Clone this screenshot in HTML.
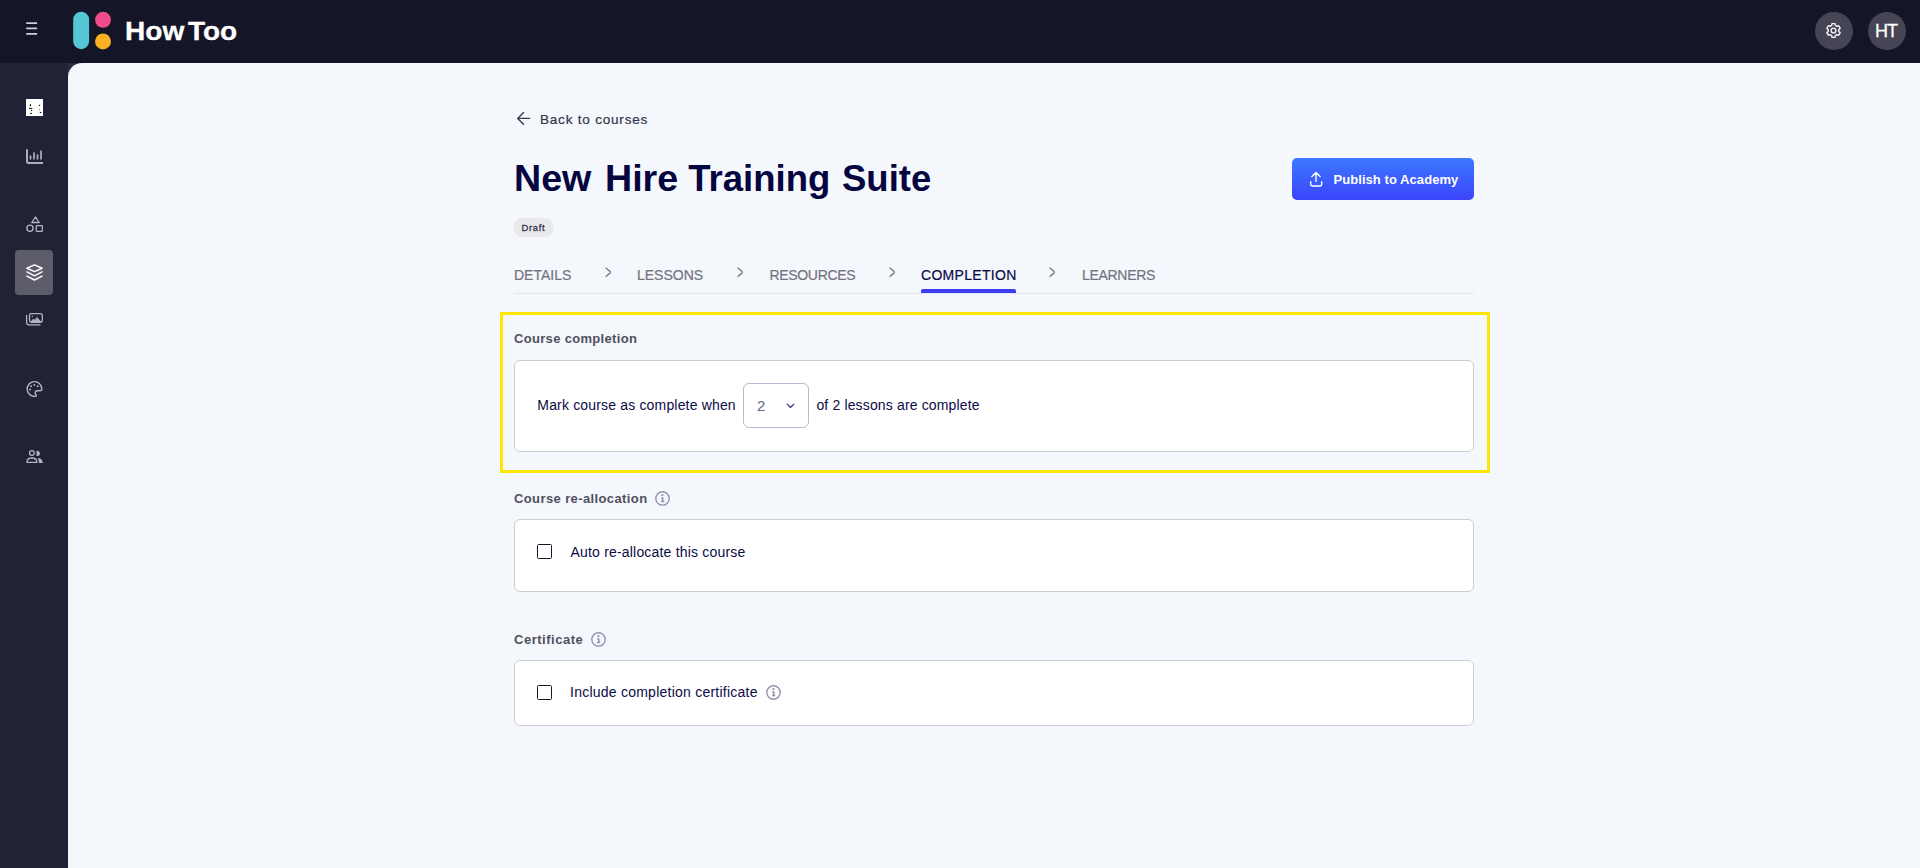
<!DOCTYPE html>
<html lang="en">
<head>
<meta charset="utf-8">
<title>New Hire Training Suite - Completion</title>
<style>
*{box-sizing:border-box;margin:0;padding:0}
html,body{width:1920px;height:868px;overflow:hidden}
body{font-family:"Liberation Sans",Arial,sans-serif;background:#151528;position:relative;color:#0a0a46}
.t{position:absolute;white-space:nowrap;line-height:1}
/* header */
#topbar{position:absolute;left:0;top:0;width:1920px;height:63px;background:#151528}
#sidebar{position:absolute;left:0;top:63px;width:68px;height:805px;background:#222236}
#corner{position:absolute;left:68px;top:63px;width:20px;height:20px;background:#2b2b3f}
#content{position:absolute;left:68px;top:63px;width:1852px;height:805px;background:#f4f7fc;border-top-left-radius:14px}
.brand{left:125px;top:18px;width:115px;height:26px;font-size:26px;font-weight:700;color:#fff;-webkit-text-stroke:.3px #fff}
.brand span{position:absolute;top:0;display:block;transform-origin:0 0;white-space:nowrap}
.circle{position:absolute;top:12px;width:38px;height:38px;border-radius:50%;background:#464556}
.ht{left:1867px;top:12px;width:38px;height:38px;line-height:38px;text-align:center;font-size:18px;color:#fff;letter-spacing:-1px;-webkit-text-stroke:.3px #fff}
/* sidebar */
.active-bg{position:absolute;left:15px;top:250px;width:38px;height:45px;border-radius:4px;background:#5c5c6b}
svg{position:absolute;overflow:visible}
/* main */
.back{left:540px;top:113.2px;font-size:13.5px;color:#33344a;letter-spacing:.8px;-webkit-text-stroke:.2px #33344a}
h1.t{left:513.6px;top:161.2px;width:420px;height:37px;font-size:36.5px;font-weight:700;color:#05053f}
h1.t span{position:absolute;top:0;display:block;transform-origin:0 0;white-space:nowrap}
.badge{position:absolute;left:514px;top:218px;width:39px;height:19px;border-radius:8px;background:#e9e9ec}
.badge-t{left:521.6px;top:223px;font-size:9.4px;font-weight:400;color:#34344a;letter-spacing:.65px;-webkit-text-stroke:.3px #34344a}
.tab{top:268px;font-size:14px;color:#73737f;-webkit-text-stroke:.2px #73737f}
.tab.on{color:#0a0a46;-webkit-text-stroke:.2px #0a0a46}
.chev{top:262px;width:20px;text-align:center;font-size:20px;color:#6d6d7a;transform:scale(.53,1.02);transform-origin:50% 50%}
.tabline{position:absolute;left:514px;top:293px;width:960px;height:1px;background:#e2e4ea}
.tabul{position:absolute;left:921px;top:289px;width:95px;height:4px;border-radius:2px 2px 0 0;background:#3d3df2}
.pub{position:absolute;left:1292px;top:158px;width:182px;height:42px;border-radius:5px;background:linear-gradient(180deg,#3d78ff 0%,#3b44fb 100%)}
.pub-t{left:1333.5px;top:173px;font-size:13px;font-weight:700;color:#fff;letter-spacing:.06px}
.hl{position:absolute;left:500px;top:312px;width:990px;height:161px;border:3px solid #ffe600}
.sec{font-size:13px;font-weight:700;color:#50505e}
.card{position:absolute;left:514px;width:960px;background:#fff;border:1px solid #cdced4;border-radius:6px}
.lbl{font-size:14px;color:#0b0b45}
.sel{position:absolute;left:743px;top:383px;width:66px;height:45px;border:1px solid #b6b9d6;border-radius:6px;background:#fff}
.selv{left:757px;top:398px;font-size:15px;color:#63668f}
.cb{position:absolute;left:537px;width:15px;height:15px;border:1.5px solid #16162f;border-radius:1.5px;background:#fff}
</style>
</head>
<body>
<div id="topbar"></div>
<div id="sidebar"></div>
<div id="corner"></div>
<div id="content"></div>

<!-- top bar -->
<div class="t brand"><span style="left:-.4px;transform:scaleX(1.08)">How</span> <span style="left:63px;transform:scaleX(1.076)">Too</span></div>
<div class="circle" style="left:1815px"></div>
<div class="circle" style="left:1868px"></div>
<div class="t ht">HT</div>

<!-- sidebar icons placeholder -->
<div class="active-bg"></div>

<svg width="1920" height="868" viewBox="0 0 1920 868" style="left:0;top:0;pointer-events:none" fill="none" stroke-linecap="round" stroke-linejoin="round">
 <!-- burger + logo mark -->
 <path d="M26.2,23.05 H37.1 M26.2,28.45 H37.1 M26.2,33.8 H37.1" stroke="#cfcfd6" stroke-width="1.7" stroke-linecap="butt"/>
 <rect x="73.2" y="11.7" width="15.9" height="37.5" rx="7.95" fill="#54c6d6"/>
 <circle cx="103" cy="19.8" r="7.95" fill="#f04b8b"/>
 <circle cx="103" cy="41.45" r="7.95" fill="#fcb122"/>
 <!-- dashboard (glitched tile) -->
 <g>
  <rect x="26" y="99" width="17" height="17" fill="#fff"/>
  <g fill="#111">
   <rect x="29.8" y="104.2" width="1.2" height="2"/><rect x="38.9" y="104.8" width="1.2" height="1.2"/>
   <rect x="29" y="107.9" width="3.2" height="1"/><rect x="30.9" y="109.9" width="1.2" height="1.2"/>
   <rect x="39.8" y="111.9" width="1.6" height="1.1"/><rect x="30" y="112.9" width="2" height="1"/>
  </g>
  <rect x="39" y="108.9" width="1" height="1.4" fill="#999"/>
 </g>
 <!-- chart -->
 <g stroke="#aeaebb" stroke-width="2" stroke-linecap="butt">
  <path d="M27,149.3 V161.2 a1.8,1.8 0 0 0 1.8,1.8 H43"/>
  <path d="M30.5,156 V158.8 M34,153 V158.8 M37.5,155 V158.8 M41,151 V158.8" stroke-linecap="round" stroke-width="1.7"/>
 </g>
 <!-- shapes -->
 <g stroke="#b4b4c0" stroke-width="1.3">
  <path d="M35.5,217 L39.2,222.5 H31.8 Z"/>
  <circle cx="30" cy="228.25" r="3.1"/>
  <rect x="36.25" y="225.65" width="6.1" height="5.7" rx=".7"/>
 </g>
 <!-- layers (active) -->
 <g stroke="#fff" stroke-width="1.5">
  <path d="M34.5,264.9 L42.1,268.3 L34.5,271.6 L26.9,268.3 Z"/>
  <path d="M27,271.9 L34.5,275.8 L42,271.9"/>
  <path d="M27,276.1 L34.5,280 L42,276.1"/>
 </g>
 <!-- images -->
 <g stroke="#b4b4c0" stroke-width="1.3">
  <rect x="29.55" y="313.65" width="12.8" height="8.6" rx="1.8"/>
  <path d="M26.6,315.4 V322.3 a2.6,2.6 0 0 0 2.6,2.6 H40"/>
  <path d="M30.6,322 L33.4,318.8 L34.7,320.2 L36.9,317.2 L41.2,322 Z" fill="#b4b4c0" stroke-width=".4"/>
  <circle cx="32.4" cy="316.4" r=".7" fill="#b4b4c0" stroke="none"/>
 </g>
 <!-- palette -->
 <g stroke="#b4b4c0" stroke-width="1.4">
  <path d="M35.78,396.24 A7.35,7.35 0 1 1 41.85,389 C41.85,390.3 41,390.8 39.8,390.8 H37.3 C35.4,390.8 34.5,392.6 35.5,394 C36.3,395.1 36.8,396 35.78,396.24 Z"/>
  <g fill="#b4b4c0" stroke="none"><circle cx="31" cy="386.2" r="1"/><circle cx="34.4" cy="385.1" r="1"/><circle cx="37.7" cy="386.2" r="1"/><circle cx="30.1" cy="389.5" r="1"/></g>
 </g>
 <!-- users -->
 <g stroke="#b4b4c0" stroke-width="1.3">
  <circle cx="31.9" cy="453" r="2.4"/>
  <path d="M26.9,462.3 C26.9,459.4 29,458 31.9,458 S36.9,459.4 36.9,462.3 Z"/>
  <g fill="#b4b4c0" stroke="none">
   <path d="M36.5,450.7 A3.4,2.7 0 0 1 36.5,456.1 Z"/>
   <path d="M37.7,458 C41,458 42.7,460 42.7,463 H39 C39,461 38.6,459.3 37.7,458 Z"/>
  </g>
 </g>
 <!-- gear -->
 <g stroke="#f4f4f6" stroke-width="1.4">
  <path d="M1835.33,25.47 L1835.02,23.67 L1831.98,23.67 L1831.67,25.47 L1830.06,26.40 L1828.34,25.77 L1826.82,28.40 L1828.23,29.57 L1828.23,31.43 L1826.82,32.60 L1828.34,35.23 L1830.06,34.60 L1831.67,35.53 L1831.98,37.33 L1835.02,37.33 L1835.33,35.53 L1836.94,34.60 L1838.66,35.23 L1840.18,32.60 L1838.77,31.43 L1838.77,29.57 L1840.18,28.40 L1838.66,25.77 L1836.94,26.40Z"/>
  <circle cx="1833.5" cy="30.5" r="2.4"/>
 </g>
 <!-- back arrow -->
 <path d="M529.5,118.4 H518 M523.5,112.6 L517.7,118.4 L523.5,124.2" stroke="#3a3a4b" stroke-width="1.4"/>
</svg>
<!-- upload icon on publish button (above button) -->


<!-- main -->
<div class="t back">Back to courses</div>
<h1 class="t"><span style="left:.7px;transform:scaleX(1.031)">New</span> <span style="left:91.9px;transform:scaleX(1.03)">Hire</span> <span style="left:174.7px">Training</span> <span style="left:328.4px">Suite</span></h1>
<div class="badge"></div><div class="t badge-t">Draft</div>
<div class="pub"></div><svg width="20" height="20" viewBox="1306.5 169 20 20" style="left:1306.1px;top:169px" fill="none" stroke="#fff" stroke-width="1.35" stroke-linecap="round" stroke-linejoin="round"><path d="M1316.5,172.6 V181.6 M1312.4,176.6 L1316.5,172.5 L1320.6,176.6 M1311.2,181.6 V184 a2,2 0 0 0 2,2 H1320.2 a2,2 0 0 0 2,-2 V181.6"/></svg><div class="t pub-t">Publish to Academy</div>

<div class="t tab" style="left:514px">DETAILS</div>
<div class="t chev" style="left:597.6px">&gt;</div>
<div class="t tab" style="left:637px">LESSONS</div>
<div class="t chev" style="left:729.6px">&gt;</div>
<div class="t tab" style="left:769.6px;letter-spacing:-.35px">RESOURCES</div>
<div class="t chev" style="left:881.5px">&gt;</div>
<div class="t tab on" style="left:921px;letter-spacing:.3px">COMPLETION</div>
<div class="t chev" style="left:1041.8px">&gt;</div>
<div class="t tab" style="left:1082px;letter-spacing:-.3px">LEARNERS</div>
<div class="tabline"></div><div class="tabul"></div>

<div class="hl"></div>
<div class="t sec" style="left:514px;top:332px;letter-spacing:.32px">Course completion</div>
<div class="card" style="top:360px;height:92px"></div>
<div class="t lbl" style="left:537.3px;top:398px;letter-spacing:.17px">Mark course as complete when</div>
<div class="sel"></div><div class="t selv">2</div>
<div class="t lbl" style="left:816.4px;top:398px;letter-spacing:.15px">of 2 lessons are complete</div>

<div class="t sec" style="left:514px;top:492px;letter-spacing:.39px">Course re-allocation</div>
<div class="card" style="top:519px;height:73px"></div>
<div class="cb" style="top:544px"></div>
<div class="t lbl" style="left:570.5px;top:545px;letter-spacing:.19px">Auto re-allocate this course</div>

<div class="t sec" style="left:514px;top:633px;letter-spacing:.52px">Certificate</div>
<div class="card" style="top:660px;height:66px"></div>
<div class="cb" style="top:685px"></div>
<div class="t lbl" style="left:570px;top:685px;letter-spacing:.24px">Include completion certificate</div>
<svg width="1920" height="868" viewBox="0 0 1920 868" style="left:0;top:0;pointer-events:none" fill="none" stroke-linecap="round" stroke-linejoin="round">
 <path d="M787.3,404.2 L790.5,407.4 L793.7,404.2" stroke="#45478f" stroke-width="1.35"/>
 <!-- info icons -->
 <g stroke="#9195b0">
  <circle cx="662.5" cy="498.4" r="6.7" stroke-width="1.4"/>
  <circle cx="662.4" cy="495.1" r="1.1" fill="#9195b0" stroke="none"/>
  <path d="M661.1,497.9 H662.8 V501.3 M661,501.5 H664.3" stroke-width="1.5" stroke-linecap="butt"/>
 </g>
 <g stroke="#9195b0" transform="translate(-64,141)">
  <circle cx="662.5" cy="498.4" r="6.7" stroke-width="1.4"/>
  <circle cx="662.4" cy="495.1" r="1.1" fill="#9195b0" stroke="none"/>
  <path d="M661.1,497.9 H662.8 V501.3 M661,501.5 H664.3" stroke-width="1.5" stroke-linecap="butt"/>
 </g>
 <g stroke="#9195b0" transform="translate(111,194.1)">
  <circle cx="662.5" cy="498.4" r="6.7" stroke-width="1.4"/>
  <circle cx="662.4" cy="495.1" r="1.1" fill="#9195b0" stroke="none"/>
  <path d="M661.1,497.9 H662.8 V501.3 M661,501.5 H664.3" stroke-width="1.5" stroke-linecap="butt"/>
 </g>
</svg>
</body>
</html>
